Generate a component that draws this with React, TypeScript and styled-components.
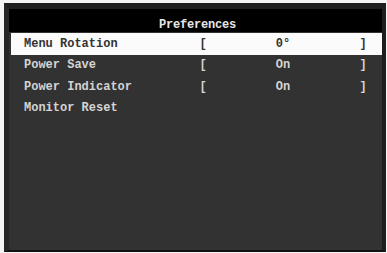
import React from "react";
import styled, { createGlobalStyle } from "styled-components";

const Global = createGlobalStyle`
  html, body { margin: 0; padding: 0; background: #f4f4f4; }
  body { width: 387px; height: 253px; overflow: hidden; }
`;

const Frame = styled.div`
  box-sizing: border-box;
  margin: 3px 1px 0 4px;
  width: 382px;
  height: 249px;
  background: #323232;
  border-top: 6px solid #1e1e1e;
  border-left: 5px solid #262626;
  border-right: 4px solid #1e1e1e;
  border-bottom: 2px solid #111;
  display: flex;
  flex-direction: column;
  font-family: "Liberation Mono", "DejaVu Sans Mono", monospace;
  font-weight: bold;
  font-size: 12px;
`;

const Header = styled.div`
  box-sizing: border-box;
  height: 23px;
  background: #000;
  color: #e6e6e6;
  display: flex;
  align-items: center;
  justify-content: center;
  padding: 8px 0 0 4px;
  letter-spacing: -0.2px;
`;

const List = styled.div`
  display: flex;
  flex-direction: column;
  padding-top: 1px;
`;

const Row = styled.div<{ $selected?: boolean }>`
  height: 21.5px;
  margin-left: 2px;
  display: grid;
  grid-template-columns: 174px 10px 1fr 10px;
  align-items: center;
  padding: 0 14px 0 13px;
  background: ${(p) => (p.$selected ? "#fbfbfb" : "transparent")};
  color: ${(p) => (p.$selected ? "#333" : "#d4d4d4")};
`;

const Label = styled.span`
  white-space: pre;
`;

const Bracket = styled.span`
  text-align: center;
`;

const Value = styled.span`
  text-align: center;
`;

const items = [
  { label: "Menu Rotation", value: "0°", selected: true },
  { label: "Power Save", value: "On" },
  { label: "Power Indicator", value: "On" },
  { label: "Monitor Reset" },
];

export default function App() {
  return (
    <>
      <Global />
      <Frame>
        <Header>Preferences</Header>
        <List>
          {items.map((it) => (
            <Row key={it.label} $selected={it.selected}>
              <Label>{it.label}</Label>
              {it.value !== undefined ? (
                <>
                  <Bracket>[</Bracket>
                  <Value>{it.value}</Value>
                  <Bracket>]</Bracket>
                </>
              ) : null}
            </Row>
          ))}
        </List>
      </Frame>
    </>
  );
}
